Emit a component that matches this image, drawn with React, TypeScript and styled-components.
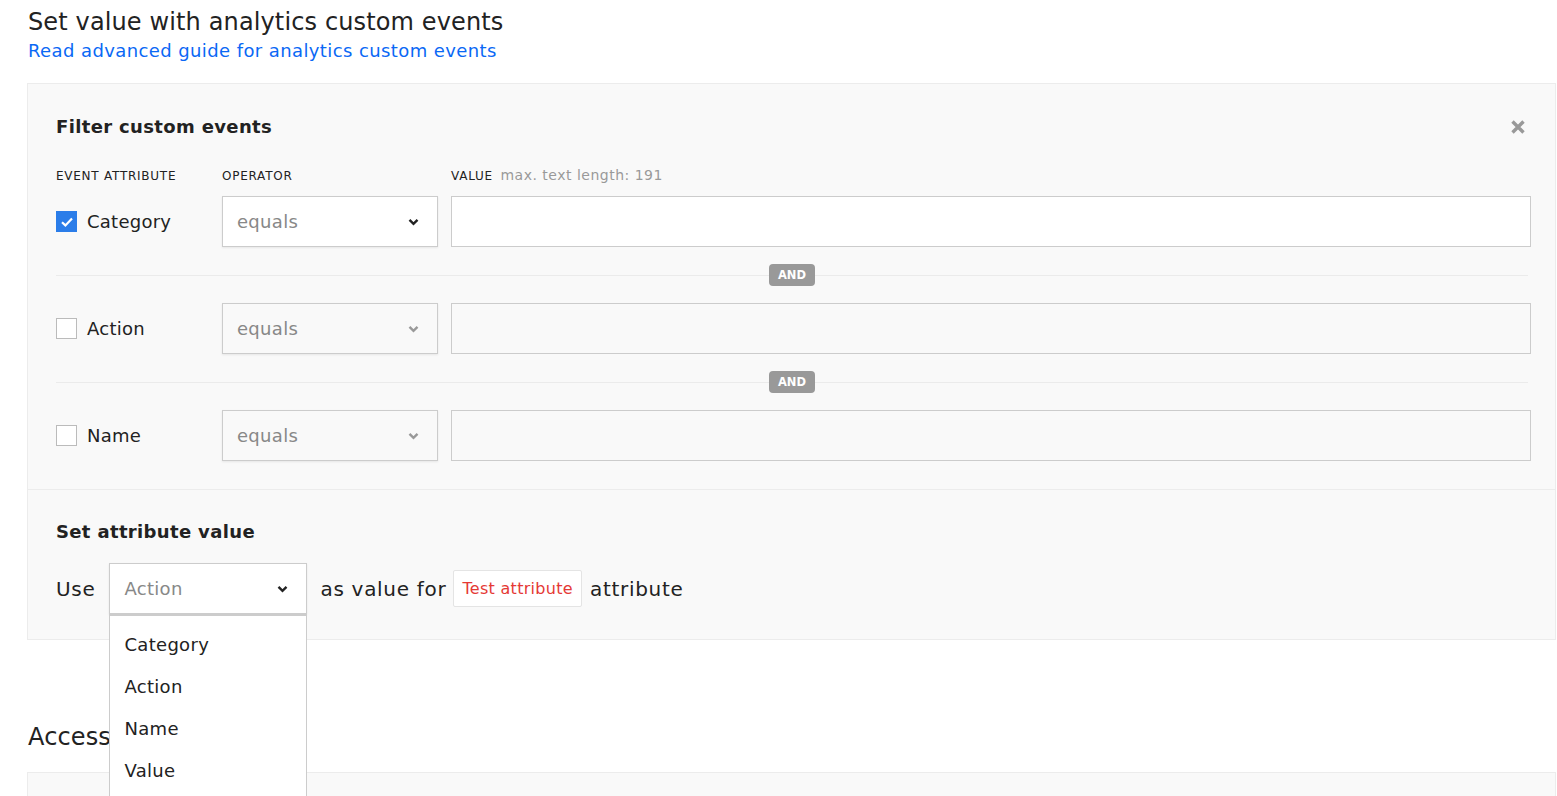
import React from 'react';
import styled, { createGlobalStyle } from 'styled-components';

const GlobalStyle = createGlobalStyle`
  body {
    margin: 0;
    background: #fff;
    font-family: "DejaVu Sans", Verdana, sans-serif;
    color: #222;
  }
`;

const Chevron = ({ color }: { color: string }) => (
    <svg width="11" height="8" viewBox="0 0 11 8">
        <path d="M1.5 1.8 L5.5 5.8 L9.5 1.8" fill="none" stroke={color} strokeWidth="2.4" />
    </svg>
);

const Check = () => (
    <svg width="14" height="12" viewBox="0 0 14 12">
        <path d="M2 6.2 L5.4 9.4 L12 2.6" fill="none" stroke="#fff" strokeWidth="2.2" />
    </svg>
);

const CloseIcon = () => (
    <svg width="14" height="14" viewBox="0 0 14 14">
        <path d="M1.5 1.5 L12.5 12.5 M12.5 1.5 L1.5 12.5" stroke="#999" strokeWidth="3.4" />
    </svg>
);

const rows = [
    { label: 'Category', checked: true },
    { label: 'Action', checked: false },
    { label: 'Name', checked: false },
];

const options = ['Category', 'Action', 'Name', 'Value'];

const App: React.FC = () => {
    return (
        <Page>
            <GlobalStyle />
            <Title>Set value with analytics custom events</Title>
            <GuideLink href="#">Read advanced guide for analytics custom events</GuideLink>
            <Panel>
                <FilterSection>
                    <SectionHeader>
                        <SectionTitle>Filter custom events</SectionTitle>
                        <CloseButton>
                            <CloseIcon />
                        </CloseButton>
                    </SectionHeader>
                    <Grid>
                        <ColumnLabel>Event attribute</ColumnLabel>
                        <ColumnLabel>Operator</ColumnLabel>
                        <ColumnLabel>
                            Value <Hint>max. text length: 191</Hint>
                        </ColumnLabel>
                    </Grid>
                    {rows.map((row, i) => (
                        <React.Fragment key={row.label}>
                            {i > 0 && (
                                <Separator>
                                    <Badge>AND</Badge>
                                </Separator>
                            )}
                            <Row $first={i === 0}>
                                <CheckLabel>
                                    <Checkbox $checked={row.checked}>{row.checked && <Check />}</Checkbox>
                                    {row.label}
                                </CheckLabel>
                                <Select $disabled={!row.checked} $width={216}>
                                    <SelectText>equals</SelectText>
                                    <Chevron color={row.checked ? '#222' : '#999'} />
                                </Select>
                                <ValueInput $disabled={!row.checked} />
                            </Row>
                        </React.Fragment>
                    ))}
                </FilterSection>
                <AttributeSection>
                    <SectionTitle>Set attribute value</SectionTitle>
                    <Sentence>
                        <Word>Use</Word>
                        <DropdownWrap>
                            <Select $disabled={false} $width={198}>
                                <SelectText>Action</SelectText>
                                <Chevron color="#222" />
                            </Select>
                            <Menu>
                                {options.map((o) => (
                                    <MenuItem key={o}>{o}</MenuItem>
                                ))}
                            </Menu>
                        </DropdownWrap>
                        <Word>as value for</Word>
                        <Tag>Test attribute</Tag>
                        <Word>attribute</Word>
                    </Sentence>
                </AttributeSection>
            </Panel>
            <NextTitle>Access</NextTitle>
            <NextPanel />
        </Page>
    );
};

export default App;

const Page = styled.div`
  padding: 6px 1px 0 27px;
  height: 790px;
  overflow: hidden;
`;

const Title = styled.h1`
  margin: 0 0 0 1px;
  font-size: 24px;
  font-weight: 400;
  line-height: 32px;
  letter-spacing: 0.13px;
  color: #222;
`;

const GuideLink = styled.a`
  display: block;
  margin-left: 1px;
  font-size: 18px;
  line-height: 26px;
  letter-spacing: 0.4px;
  color: #0a68f5;
  text-decoration: none;
`;

const Panel = styled.div`
  margin-top: 19px;
  background: #f9f9f9;
  border: 1px solid #ececec;
`;

const FilterSection = styled.div`
  padding: 31px 25px 28px 28px;
  border-bottom: 1px solid #ececec;
`;

const SectionHeader = styled.div`
  display: flex;
  justify-content: space-between;
  align-items: center;
`;

const SectionTitle = styled.h2`
  margin: 0;
  font-size: 18px;
  font-weight: 700;
  line-height: 24px;
  letter-spacing: 0.35px;
  color: #222;
`;

const CloseButton = styled.span`
  display: flex;
  margin-right: 5px;
  cursor: pointer;
`;

const Grid = styled.div`
  display: grid;
  grid-template-columns: 166px 229px 1fr;
  align-items: center;
`;

const ColumnLabel = styled.div`
  margin-top: 28px;
  font-size: 12px;
  line-height: 16px;
  letter-spacing: 0.75px;
  text-transform: uppercase;
  color: #222;
`;

const Hint = styled.span`
  margin-left: 3px;
  font-size: 14px;
  letter-spacing: 0.5px;
  text-transform: none;
  color: #999;
`;

const Row = styled(Grid)<{ $first: boolean }>`
  margin-top: ${(p) => (p.$first ? '12px' : '0')};
`;

const CheckLabel = styled.label`
  display: flex;
  align-items: center;
  gap: 10px;
  font-size: 18px;
  letter-spacing: 0.25px;
  color: #222;
`;

const Checkbox = styled.span<{ $checked: boolean }>`
  width: 21px;
  height: 21px;
  box-sizing: border-box;
  display: flex;
  align-items: center;
  justify-content: center;
  background: ${(p) => (p.$checked ? '#2b7de9' : '#fff')};
  border: 1px solid ${(p) => (p.$checked ? '#2b7de9' : '#bbb')};
`;

const Select = styled.div<{ $disabled: boolean; $width: number }>`
  width: ${(p) => p.$width}px;
  height: 51px;
  box-sizing: border-box;
  display: flex;
  align-items: center;
  justify-content: space-between;
  padding: 0 18px 0 14px;
  background: ${(p) => (p.$disabled ? '#f9f9f9' : '#fff')};
  border: 1px solid #ccc;
  box-shadow: 0 1px 2px rgba(0, 0, 0, 0.08);
`;

const SelectText = styled.span`
  font-size: 18px;
  letter-spacing: 0.3px;
  color: #888;
`;

const ValueInput = styled.div<{ $disabled: boolean }>`
  height: 51px;
  margin-right: -1px;
  box-sizing: border-box;
  background: ${(p) => (p.$disabled ? '#f9f9f9' : '#fff')};
  border: 1px solid #ccc;
`;

const Separator = styled.div`
  position: relative;
  height: 56px;
  display: flex;
  align-items: center;
  justify-content: center;

  &::before {
    content: '';
    position: absolute;
    left: 0;
    right: 2px;
    top: 28px;
    border-top: 1px solid #ebebeb;
  }
`;

const Badge = styled.span`
  position: relative;
  width: 46px;
  height: 22px;
  margin-right: 2px;
  border-radius: 4px;
  background: #999;
  color: #fff;
  font-size: 11.5px;
  font-weight: 700;
  display: flex;
  align-items: center;
  justify-content: center;
`;

const AttributeSection = styled.div`
  padding: 30px 28px 25px;
`;

const Sentence = styled.div`
  margin-top: 19px;
  display: flex;
  align-items: center;
  font-size: 20px;
  color: #222;
`;

const Word = styled.span`
  letter-spacing: 0.7px;
  &:first-child {
    margin-right: 14px;
  }
`;

const DropdownWrap = styled.div`
  position: relative;
  margin-right: 13px;
`;

const Menu = styled.ul`
  position: absolute;
  top: 100%;
  left: 0;
  width: 198px;
  box-sizing: border-box;
  margin: 0;
  padding: 8px 0 24px;
  list-style: none;
  background: #fff;
  border: 1px solid #ccc;
  border-top-width: 2px;
  z-index: 2;
`;

const MenuItem = styled.li`
  padding-left: 14px;
  line-height: 42px;
  font-size: 18px;
  letter-spacing: 0.3px;
  color: #222;
`;

const Tag = styled.span`
  margin: 0 8px 0 7px;
  padding: 0 8px;
  height: 35px;
  display: flex;
  align-items: center;
  background: #fff;
  border: 1px solid #e4e4e4;
  border-radius: 2px;
  font-size: 16px;
  letter-spacing: 0.3px;
  color: #e53935;
`;

const NextTitle = styled.h1`
  margin: 81px 0 0 1px;
  font-size: 24px;
  font-weight: 400;
  line-height: 32px;
  letter-spacing: 0.13px;
  color: #222;
`;

const NextPanel = styled.div`
  margin-top: 19px;
  height: 120px;
  background: #f9f9f9;
  border: 1px solid #ececec;
`;
